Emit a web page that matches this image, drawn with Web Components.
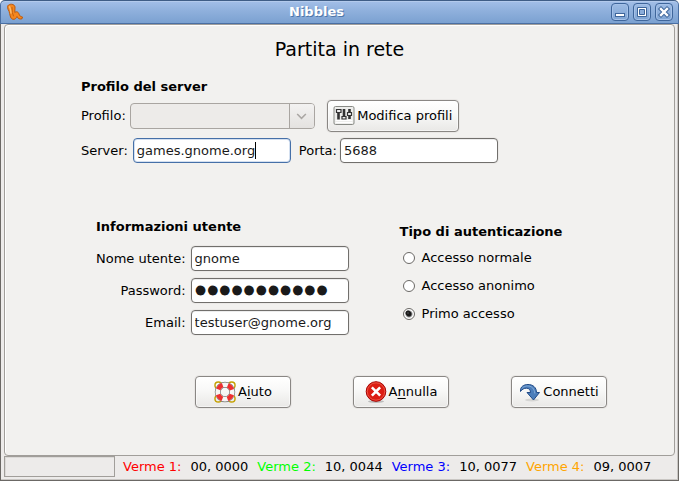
<!DOCTYPE html>
<html lang="it">
<head>
<meta charset="utf-8">
<title>Nibbles</title>
<style>
html, body { margin: 0; height: 100%; }
body { font: 13px/16px "DejaVu Sans", sans-serif; color: #000; background: #fff; }
</style>
</head>
<body>
<nibbles-window></nibbles-window>
<script>
class Base extends HTMLElement {
  connectedCallback() {
    if (this.shadowRoot) return;
    this.attachShadow({ mode: "open" }).innerHTML = "<style>*{box-sizing:border-box}" + this.css() + "</style>" + this.html();
  }
  css() { return ""; }
  html() { return "<slot></slot>"; }
}

customElements.define("title-bar", class extends Base {
  css() { return `
    :host { display: grid; grid-template-columns: 1fr auto 1fr; align-items: center; height: 24px; padding: 0 5px;
      background: linear-gradient(#a3bfe8, #8fb0dc 45%, #7ba1d1); border-top: 1px solid #3f5d86; border-bottom: 1px solid #4a6fa3;
      box-shadow: inset 0 1px #b3caec; border-left: 1px solid #4a6fa3; border-right: 1px solid #4a6fa3; border-radius: 5px 5px 0 0; box-sizing: border-box; }
    h1 { margin: 0; font: bold 13px/16px "DejaVu Sans", sans-serif; color: #fff; text-shadow: 1px 1px #4f76aa; padding-right: 46px; }
    .tools { display: flex; justify-content: flex-end; gap: 4px; }
    button { width: 18px; height: 18px; padding: 0; border: 1px solid #3f669b; border-radius: 4px; background: linear-gradient(#9dbbe4, #7fa4d3);
      box-shadow: inset 0 0 0 1px #a5c1e8; display: block; }
    svg { display: block; }
  `; }
  html() { return `
    <svg width="18" height="18" viewBox="0 0 18 18" fill="none" stroke-linecap="round" stroke-linejoin="round"><path d="M1.500 4C1 .5 8.500 0 9 4L8.800 9.500C10.500 8 12.500 9 13 11C13.500 13 14.500 13.500 16.500 14L16 15.800C13.500 16.500 11.800 15.500 11 13.500C9.500 17 6.500 17 5 15C3.500 12.500 4 9 2.200 6.500Z" fill="#f5871f" stroke="#bd5a0c"/><path d="M6 4.500L6.300 9.500L7.500 13" stroke="#bd5a0c" stroke-width=".9"/><path d="M3.600 3.800Q4.800 7 5 10" stroke="#ffbd69" stroke-width="1.400"/></svg>
    <h1><slot></slot></h1>
    <div class="tools">
      <button aria-label="Riduci"><svg width="16" height="16"><rect x="3.500" y="9.500" width="9" height="3" fill="#fff" stroke="#3f669b"/></svg></button>
      <button aria-label="Ingrandisci"><svg width="16" height="16"><path d="M3.500 3.500h9v9h-9z" fill="#fff" stroke="#3f669b"/><path d="M5.500 5.500h5v5h-5z" fill="#8badda" stroke="#3f669b"/></svg></button>
      <button aria-label="Chiudi"><svg width="16" height="16"><path d="M5 5l6 6m0-6l-6 6" stroke="#3f669b" stroke-width="4.400" stroke-linecap="square"/><path d="M5 5l6 6m0-6l-6 6" stroke="#fff" stroke-width="2.400" stroke-linecap="square"/></svg></button>
    </div>`; }
});

customElements.define("text-field", class extends Base {
  css() { return `
    :host { display: flex; align-items: center; justify-content: flex-end; gap: var(--gap, 5px); position: relative; }
    label { white-space: nowrap; }
    .box { position: relative; }
    input { display: block; width: 158px; height: 25px; padding: 0 3px; border: 1px solid #716f6c; border-radius: 4px; background: #fff; color: #1a1a1a;
      font: 13px/16px "DejaVu Sans", sans-serif; outline: none; box-shadow: 0 0 0 1px #ebe9e7, inset 0 1px #ededed; }
    input[type=password] { font: bold 19px/23px "DejaVu Sans", sans-serif; -webkit-text-stroke: 3px #1a1a1a; }
    :host([active]) input { border-color: #4670a8; box-shadow: inset 0 0 0 1px #d4e0f0; }
    .caret { position: absolute; left: 122px; top: 4px; width: 1px; height: 17px; background: #000; }
  `; }
  html() {
    const a = n => this.getAttribute(n) || "";
    return `<label for="f">${a("label")}</label><div class="box"><input id="f" type="${a("type") || "text"}" value="${a("value")}">${this.hasAttribute("active") ? '<span class="caret"></span>' : ""}</div>`;
  }
});

customElements.define("profile-select", class extends Base {
  css() { return `
    :host { display: flex; align-items: center; gap: 4px; }
    .box { display: grid; width: 185px; height: 26px; border: 1px solid #a9a5a1; border-radius: 4px; overflow: hidden; grid-template-columns: 1fr 25px; background: #edebe9; }
    select { grid-area: 1 / 1 / 2 / 3; appearance: none; border: 0; background: none; width: 100%; font: inherit; }
    svg { grid-area: 1 / 2; width: 25px; height: 24px; border-left: 1px solid #a9a5a1; background: linear-gradient(#f3f2f1, #e4e2e0); }
  `; }
  html() { return `<label for="s">Profilo:</label><div class="box"><select id="s" disabled></select><svg viewBox="0 0 25 24" aria-hidden="true"><path d="M7.500 10l4.500 4.500 4.500-4.500" fill="none" stroke="#aaa7a4" stroke-width="1.600"/></svg></div>`; }
});

customElements.define("push-button", class extends Base {
  css() { return `
    :host { display: block; }
    button { display: flex; align-items: center; justify-content: center; gap: 2px; width: 100%; height: 32px; padding: 0 5px 1px; border: 1px solid #8a8784; border-radius: 4px;
      background: linear-gradient(#fff, #f8f8f7 45%, #e9e8e6); box-shadow: 0 0 0 1px #e9e7e5, inset 0 0 0 1px #fff8; font: 13px/16px "DejaVu Sans", sans-serif; color: #000; white-space: nowrap; }
    ::slotted(svg) { display: block; flex: none; }
  `; }
  html() { return `<button type="button"><slot name="icon"></slot><span><slot></slot></span></button>`; }
});

customElements.define("radio-option", class extends Base {
  css() { return `
    :host { display: block; }
    label { display: flex; align-items: center; gap: 7px; }
    input { appearance: none; width: 12px; height: 12px; margin: 0; border: 1px solid #6b6966; border-radius: 50%; background: #fff; }
    input:checked { background: radial-gradient(circle at 4px 4px, #777 0, #1a1a1a 1px, #1a1a1a 2px, transparent 3px), radial-gradient(circle, #1a1a1a 2px, #fff 4px); }
  `; }
  html() { return `<label><input type="radio" ${this.hasAttribute("checked") ? "checked" : ""}><slot></slot></label>`; }
  connectedCallback() {
    super.connectedCallback();
    this.shadowRoot.querySelector("input").addEventListener("change", () => {
      for (const o of this.parentElement.querySelectorAll("radio-option"))
        if (o !== this) o.shadowRoot.querySelector("input").checked = false;
    });
  }
});

customElements.define("form-group", class extends Base {
  css() { return `
    :host { display: flex; flex-direction: column; gap: var(--row-gap, 8px); }
    h3 { margin: 0 0 var(--head-gap, 4px); font: bold 13px/16px "DejaVu Sans", sans-serif; }
  `; }
  html() { return `<h3>${this.getAttribute("heading")}</h3><slot></slot>`; }
});

customElements.define("status-bar", class extends Base {
  css() { return `
    :host { display: flex; align-items: center; height: 22px; gap: 8px; }
    .progress { width: 111px; height: 21px; border: 1px solid #a19e9a; box-shadow: inset 1px 1px #dcdad8; align-self: flex-start; }
    .scores { display: flex; gap: 9px; }
  `; }
  html() { return `<div class="progress"></div><div class="scores"><slot></slot></div>`; }
});

customElements.define("worm-score", class extends Base {
  css() { return `
    :host { display: flex; gap: 9px; white-space: nowrap; }
    .name { color: ${this.getAttribute("color")}; }
  `; }
  html() { return `<span class="name">${this.getAttribute("name")}</span><span><slot></slot></span>`; }
});

customElements.define("nibbles-window", class extends Base {
  css() { return `
    :host { display: flex; flex-direction: column; min-height: 100vh; box-sizing: border-box; background: #edebea; border-radius: 5px 5px 0 0; border-bottom: 1px solid #6b6865; }
    .frame { flex: 1; display: flex; flex-direction: column; padding: 0 3px 2px; border: solid #6b6865; border-width: 0 1px; box-shadow: inset -1px -1px #c9c6c3; }
    main { flex: 1; border: 1px solid #a19e9a; border-radius: 4px; background: #f2f1ef; box-shadow: inset 1px 1px #fff; padding: 13px 0 0; }
    h2 { margin: 0; font: 19px/22px "DejaVu Sans", sans-serif; text-align: center; }
    .server { padding: 19px 0 0 76px; --row-gap: 6px; --head-gap: -1px; }
    .row { display: flex; align-items: center; }
    .first { gap: 12px; }
    .first push-button { width: 132px; }
    .second { gap: 8px; }
    .port { --gap: 3px; }
    .columns { display: flex; gap: 51px; padding: 56px 0 0 91px; }
    .user { --row-gap: 7px; }
    .auth { padding-top: 5px; --row-gap: 12px; --head-gap: -2px; }
    radio-option { margin-left: 3px; }
    .actions { display: flex; gap: 62px; padding: 41px 0 0 190px; }
    .actions push-button { width: 96px; }
    u { text-underline-offset: 2px; }
  `; }
  html() { return `
    <title-bar>Nibbles</title-bar>
    <div class="frame">
      <main>
        <h2>Partita in rete</h2>
        <form-group class="server" heading="Profilo del server">
          <div class="row first"><profile-select></profile-select>
            <push-button><svg slot="icon" width="22" height="22" viewBox="0 0 22 22"><rect x="1" y="1.500" width="20" height="18" rx="1.500" fill="#eeeeec" stroke="#888a85"/><path d="M2.500 15.500h17M2.500 17.500h17" stroke="#fff"/><path d="M5.500 5v9.500M11 4v9M16.500 4v10" stroke="#333" stroke-width="2.600"/><g fill="#eee" stroke="#333" stroke-width="1.200"><path d="M3.500 4.500h4.500v3h-4.500zM9 11.500h4v2.500h-4zM14.500 7.500h4v3h-4z"/></g></svg>Modifica profili</push-button></div>
          <div class="row second"><text-field active label="Server:" value="games.gnome.org"></text-field><text-field class="port" label="Porta:" value="5688"></text-field></div>
        </form-group>
        <div class="columns">
          <form-group class="user" heading="Informazioni utente">
            <text-field label="Nome utente:" value="gnome"></text-field>
            <text-field label="Password:" type="password" value="●●●●●●●●●●●"></text-field>
            <text-field label="Email:" value="testuser@gnome.org"></text-field>
          </form-group>
          <form-group class="auth" heading="Tipo di autenticazione">
            <radio-option>Accesso normale</radio-option>
            <radio-option>Accesso anonimo</radio-option>
            <radio-option checked>Primo accesso</radio-option>
          </form-group>
        </div>
        <div class="actions">
          <push-button><svg slot="icon" width="22" height="22" viewBox="0.500 0.500 23 23"><g fill="none" stroke="#c4a000" stroke-width="1.500"><circle cx="5" cy="5" r="3.500"/><circle cx="19" cy="5" r="3.500"/><circle cx="5" cy="19" r="3.500"/><circle cx="19" cy="19" r="3.500"/></g><circle cx="12" cy="12" r="7.600" fill="none" stroke="#777" stroke-width="6.200"/><circle cx="12" cy="12" r="7.600" fill="none" stroke="#f6f6f4" stroke-width="4.800"/><circle cx="12" cy="12" r="7.600" fill="none" stroke="#ee3030" stroke-width="4.800" stroke-dasharray="6.500 5.438" stroke-dashoffset="-2.720"/></svg>A<u>i</u>uto</push-button>
          <push-button><svg slot="icon" width="22" height="22" viewBox="1 1 22 22"><ellipse cx="12" cy="21.500" rx="8" ry="1.500" fill="#bbb"/><circle cx="12" cy="11.500" r="9.800" fill="#dc1c12" stroke="#a40000"/><circle cx="12" cy="11.500" r="8.700" fill="none" stroke="#f0604d" stroke-width=".8"/><path d="M8.800 8.300l6.400 6.400m0-6.400l-6.400 6.400" stroke="#fff" stroke-width="2.600" stroke-linecap="square"/></svg>A<u>n</u>nulla</push-button>
          <push-button><svg slot="icon" width="22" height="22" viewBox="1 1 22 22"><ellipse cx="14" cy="20" rx="7" ry="1.500" fill="#d5d5d3"/><path d="M2.500 11.500C2 6.500 6 4.500 10 4.500 C15 4.500 18.500 7.500 18.500 12.500 H21.500 L15.500 20 L9 12.500 H12.500 C12.500 9.800 11 8.200 8.500 8.200 C6 8.200 4 9.300 2.500 11.500Z" fill="#4b7dba" stroke="#204a87"/><path d="M4 8.500C6 5.300 16 3.500 16.800 13.500" fill="none" stroke="#85add9"/></svg>Connetti</push-button>
        </div>
      </main>
      <status-bar>
        <worm-score name="Verme 1:" color="#f00">00, 0000</worm-score>
        <worm-score name="Verme 2:" color="#0f0">10, 0044</worm-score>
        <worm-score name="Verme 3:" color="#00f">10, 0077</worm-score>
        <worm-score name="Verme 4:" color="#ffa500">09, 0007</worm-score>
      </status-bar>
    </div>`; }
});
</script>
</body>
</html>
